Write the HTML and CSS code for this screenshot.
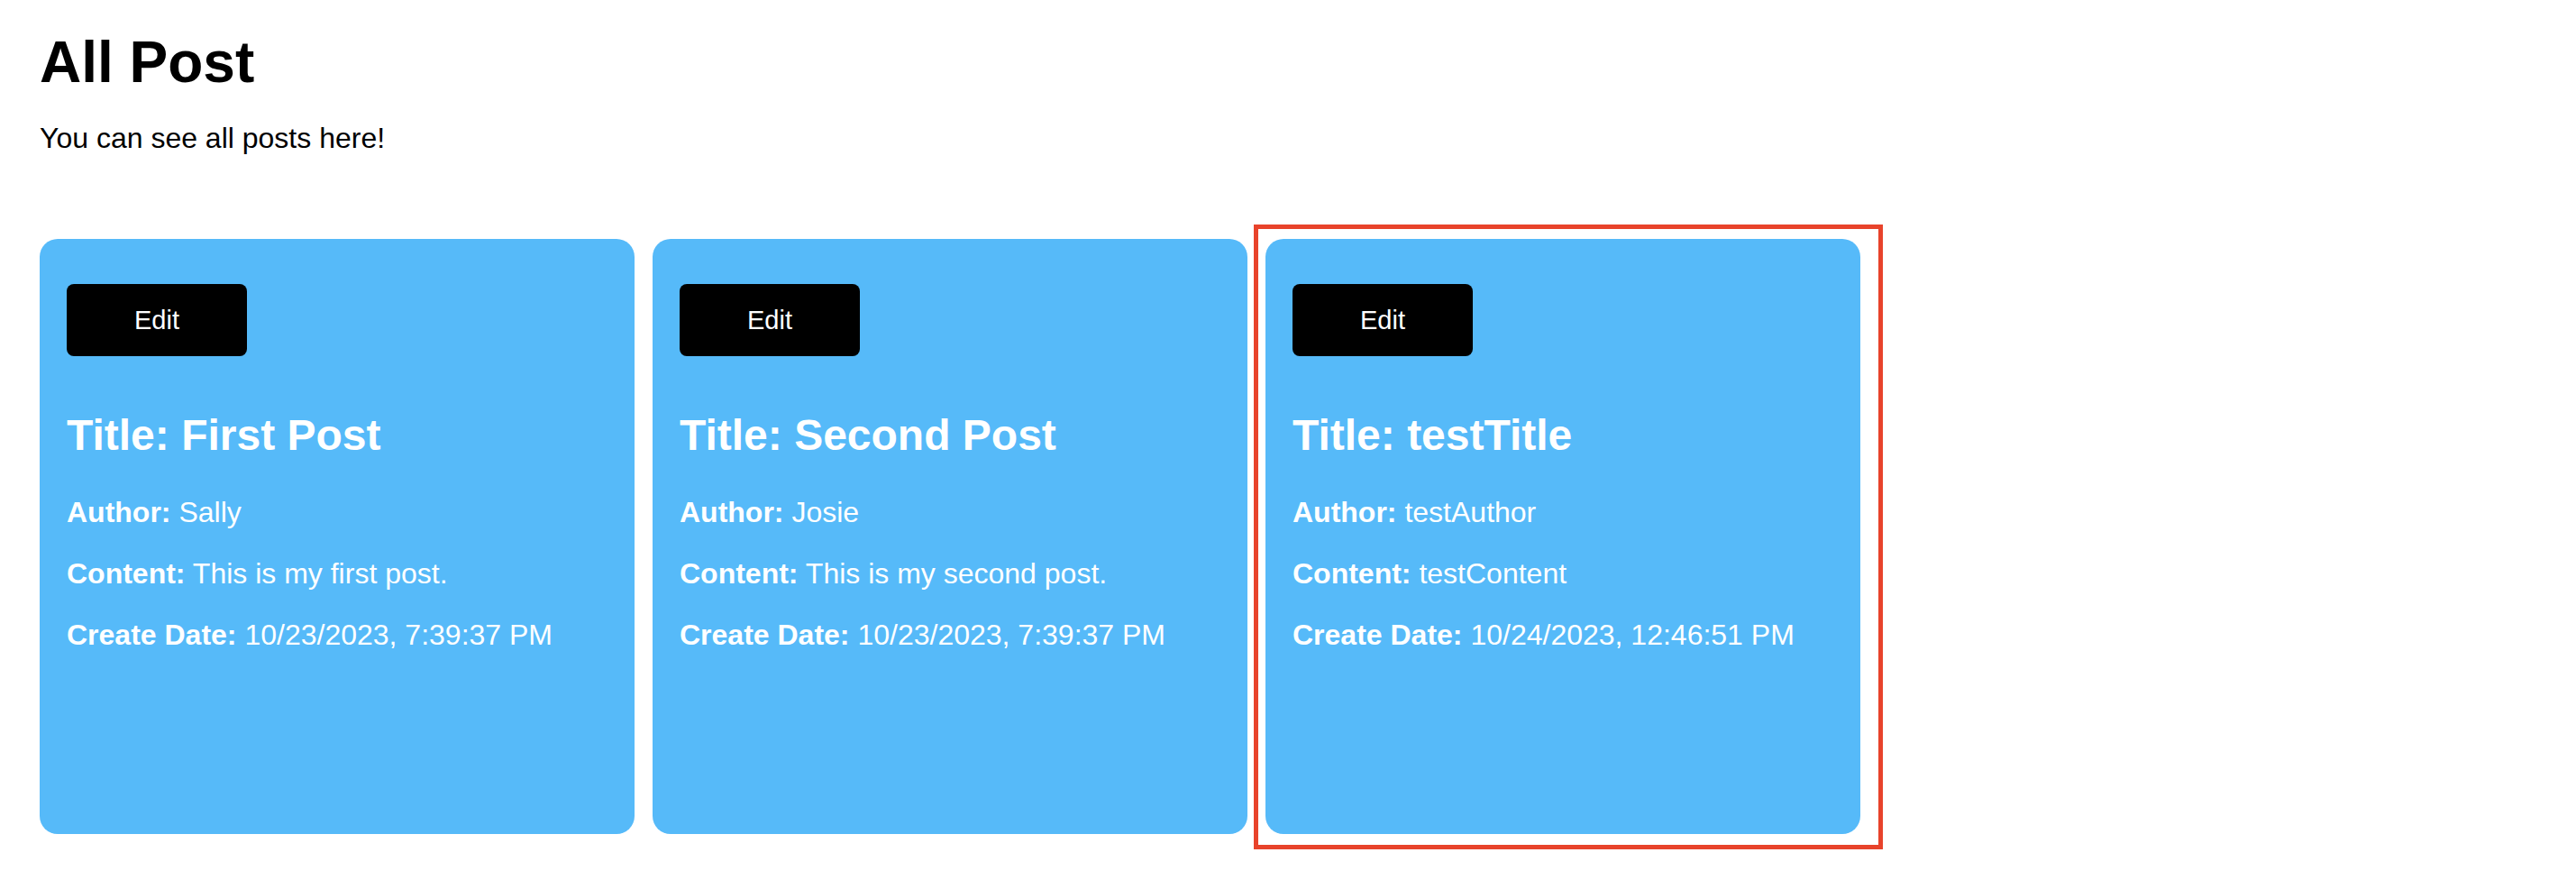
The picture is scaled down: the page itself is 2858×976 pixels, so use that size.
FILE: index.html
```html
<!DOCTYPE html>
<html lang="en">
<head>
<meta charset="utf-8">
<title>All Post</title>
<link rel="stylesheet" href="styles.css">
</head>
<body>
<main class="page">
  <h1 class="page-title">All Post</h1>
  <p class="page-subtitle">You can see all posts here!</p>
  <section class="posts">
    <article class="post-card">
      <button class="edit-btn" type="button">Edit</button>
      <h2 class="post-title">Title: First Post</h2>
      <p class="post-line"><strong>Author:</strong> Sally</p>
      <p class="post-line"><strong>Content:</strong> This is my first post.</p>
      <p class="post-line"><strong>Create Date:</strong> 10/23/2023, 7:39:37 PM</p>
    </article>
    <article class="post-card">
      <button class="edit-btn" type="button">Edit</button>
      <h2 class="post-title">Title: Second Post</h2>
      <p class="post-line"><strong>Author:</strong> Josie</p>
      <p class="post-line"><strong>Content:</strong> This is my second post.</p>
      <p class="post-line"><strong>Create Date:</strong> 10/23/2023, 7:39:37 PM</p>
    </article>
    <article class="post-card highlighted">
      <button class="edit-btn" type="button">Edit</button>
      <h2 class="post-title">Title: testTitle</h2>
      <p class="post-line"><strong>Author:</strong> testAuthor</p>
      <p class="post-line"><strong>Content:</strong> testContent</p>
      <p class="post-line"><strong>Create Date:</strong> 10/24/2023, 12:46:51 PM</p>
    </article>
  </section>
</main>
</body>
</html>
```

FILE: styles.css
```css
* {
  box-sizing: border-box;
}

html, body {
  margin: 0;
  padding: 0;
  background: #ffffff;
}

body {
  font-family: "Liberation Sans", Arial, Helvetica, sans-serif;
  color: #000000;
  min-height: 100vh;
}

.page {
  padding: 32px 0 52px 44px;
}

.page-title {
  margin: 0 0 29px;
  font-size: 64px;
  font-weight: bold;
  line-height: normal;
}

.page-subtitle {
  margin: 0;
  font-size: 32px;
  line-height: normal;
}

.posts {
  display: flex;
  gap: 20px;
  margin-top: 93px;
}

.post-card {
  position: relative;
  width: 660px;
  height: 660px;
  padding: 50px 30px;
  background: #56baf9;
  border-radius: 20px;
  color: #ffffff;
}

.highlighted::after {
  content: "";
  position: absolute;
  top: -16px;
  left: -13px;
  right: -25px;
  bottom: -17px;
  border: 5px solid #e8432b;
  pointer-events: none;
}

.edit-btn {
  display: block;
  width: 200px;
  height: 80px;
  padding: 0;
  border: none;
  border-radius: 8px;
  background: #000000;
  color: #ffffff;
  font-family: "Liberation Sans", Arial, Helvetica, sans-serif;
  font-size: 29px;
  cursor: pointer;
}

.post-title {
  margin: 60px 0 40px;
  font-size: 48px;
  font-weight: bold;
  line-height: normal;
}

.post-line {
  margin: 0 0 32px;
  font-size: 32px;
  line-height: 36px;
}

.post-line strong {
  font-weight: bold;
}
```
